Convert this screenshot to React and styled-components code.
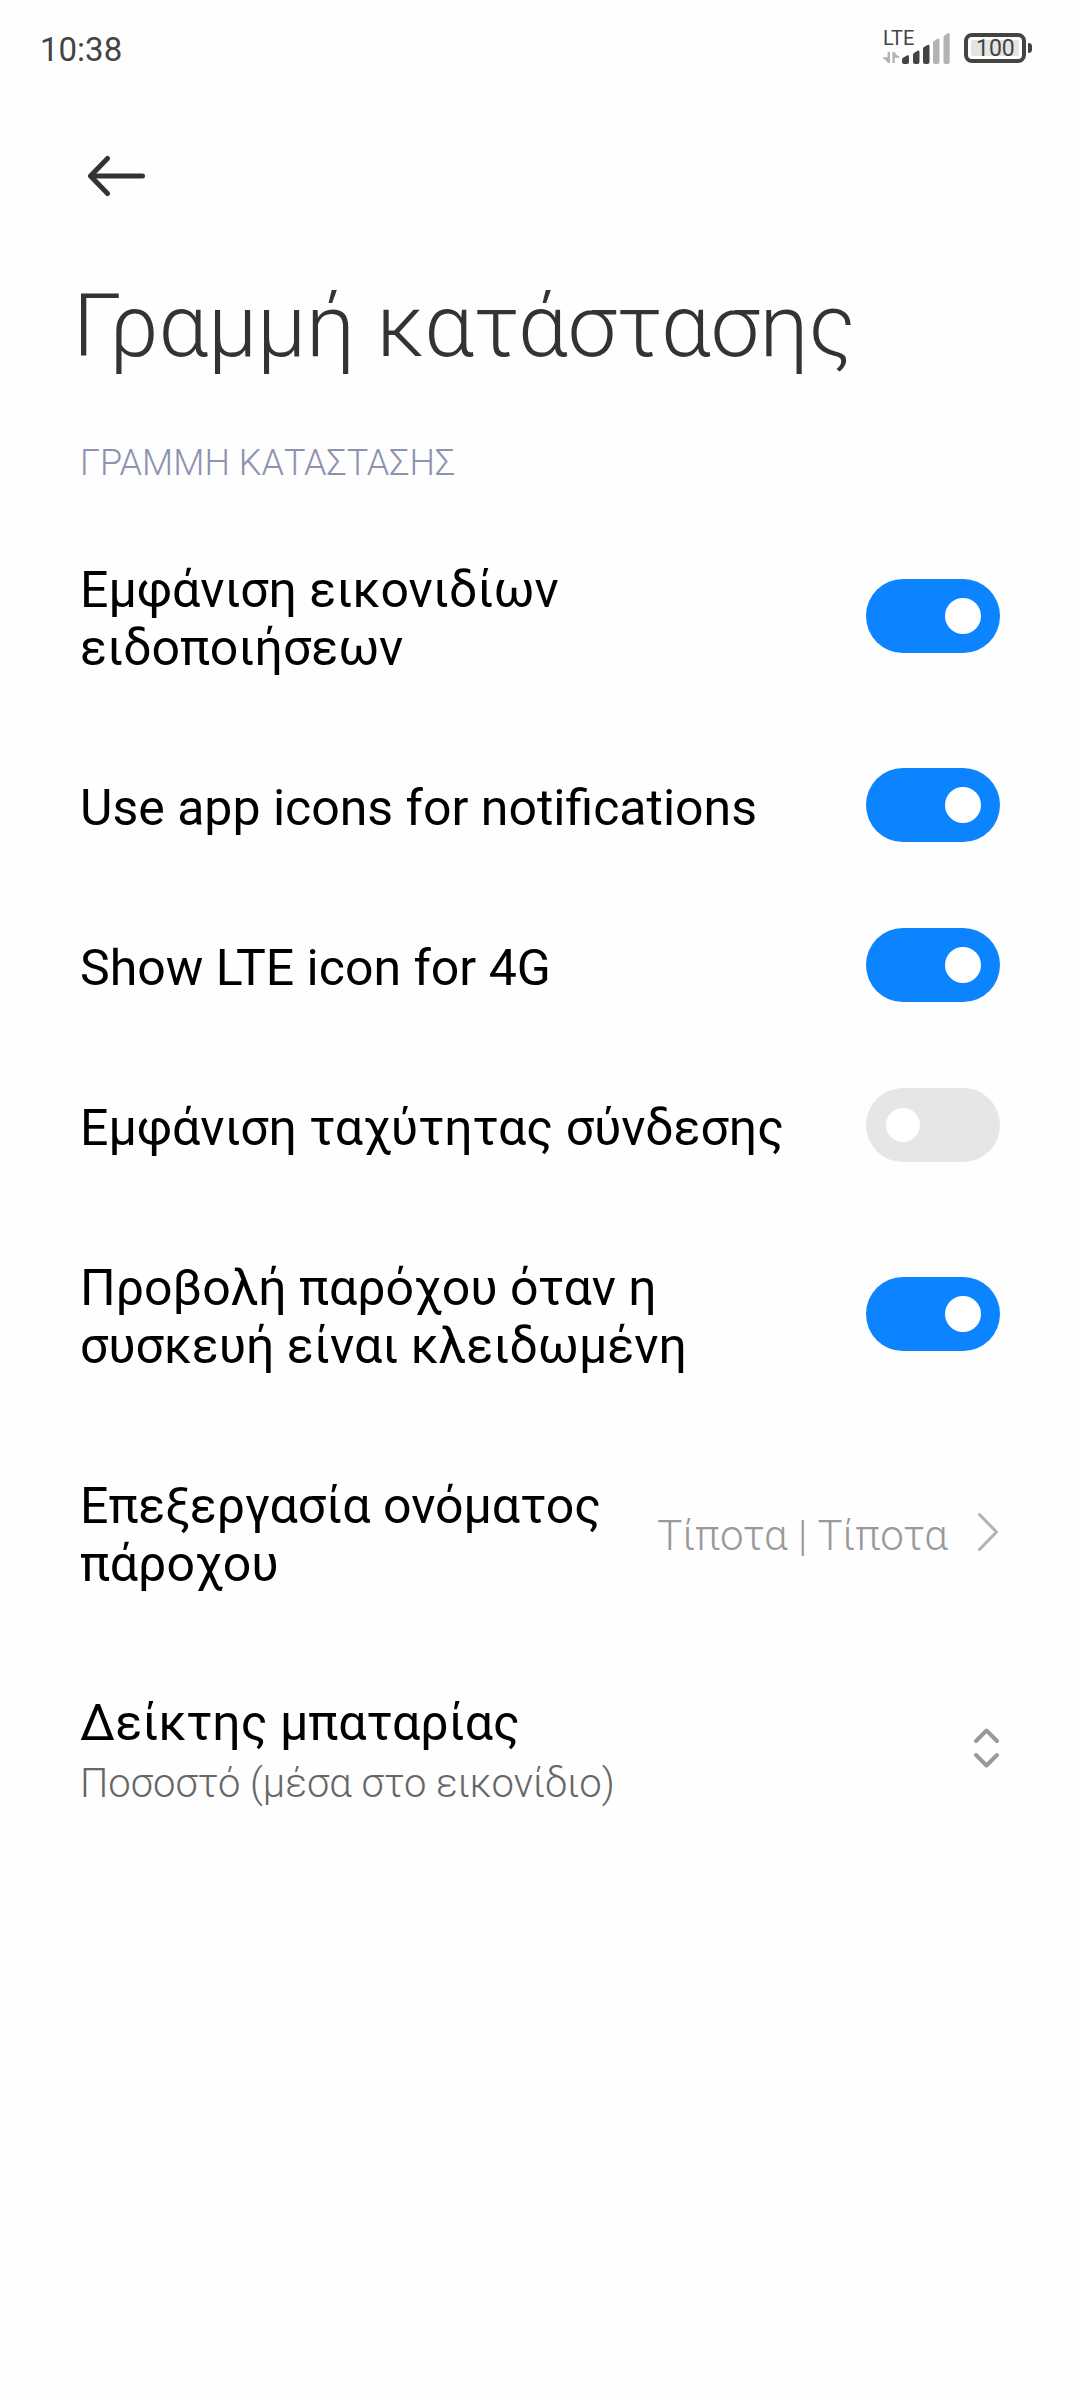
import React, { useState } from "react";
import styled, { createGlobalStyle } from "styled-components";

const switches = [
  { id: "notification-icons", label: "Εμφάνιση εικονιδίων ειδοποιήσεων", on: true },
  { id: "app-icons", label: "Use app icons for notifications", on: true },
  { id: "lte-icon", label: "Show LTE icon for 4G", on: true },
  { id: "connection-speed", label: "Εμφάνιση ταχύτητας σύνδεσης", on: false },
  { id: "carrier-locked", label: "Προβολή παρόχου όταν η συσκευή είναι κλειδωμένη", on: true },
];

export default function App() {
  const [values, setValues] = useState(
    Object.fromEntries(switches.map((item) => [item.id, item.on]))
  );

  const toggle = (id) => setValues((previous) => ({ ...previous, [id]: !previous[id] }));

  return (
    <>
      <GlobalStyle />
      <StatusBar>
        <Clock>10:38</Clock>
        <StatusIcons>
          <Network>
            <NetworkType>LTE</NetworkType>
            <SignalIcon />
          </Network>
          <Battery>
            <BatteryIcon />
            <BatteryLevel>100</BatteryLevel>
          </Battery>
        </StatusIcons>
      </StatusBar>

      <header>
        <NavBar>
          <BackButton type="button" aria-label="Πίσω">
            <BackIcon />
          </BackButton>
        </NavBar>
        <PageTitle>Γραμμή κατάστασης</PageTitle>
      </header>

      <Section>
        <SectionTitle>ΓΡΑΜΜΗ ΚΑΤΑΣΤΑΣΗΣ</SectionTitle>

        {switches.map((item) => (
          <Row key={item.id}>
            <RowLabel htmlFor={item.id}>{item.label}</RowLabel>
            <Switch
              id={item.id}
              type="checkbox"
              role="switch"
              checked={values[item.id]}
              onChange={() => toggle(item.id)}
            />
          </Row>
        ))}

        <RowButton type="button">
          <RowText>Επεξεργασία ονόματος πάροχου</RowText>
          <RowValue>Τίποτα | Τίποτα</RowValue>
          <RowIcon>
            <ChevronIcon />
          </RowIcon>
        </RowButton>

        <Row>
          <SelectGroup>
            <SelectLabel htmlFor="battery">Δείκτης μπαταρίας</SelectLabel>
            <Select id="battery" defaultValue="inside">
              <option value="inside">Ποσοστό (μέσα στο εικονίδιο)</option>
            </Select>
          </SelectGroup>
          <RowIcon>
            <UpDownIcon />
          </RowIcon>
        </Row>
      </Section>
    </>
  );
}

function SignalIcon() {
  return (
    <svg width="68" height="34" viewBox="883 32 68 34" aria-hidden="true">
      <g fill="#b3b3b3">
        <path d="M887.6 52h2.4v11h-2.2q-1-3-4.8-4.6v-1.2h4.6z" />
        <path d="M892.4 52h2.2q1 3 4.8 4.6v1.2h-4.6V63h-2.4z" />
        <path d="M933 42.5q0-1 1-1.500l3.500-2.300q2-.7 2 1.300V62q0 2-2 2H935q-2 0-2-2z" />
        <path d="M943.500 37q0-1 1-1.500l3.200-2.300q2-.7 2 1.300V62q0 2-2 2h-2.200q-2 0-2-2z" />
      </g>
      <g fill="#444">
        <path d="M902 60q0-1.500 1-2.200l4-2.300q2-.6 2 1.300V62q0 2-2 2h-3q-2 0-2-2z" />
        <path d="M913 55q0-1.500 1-2l3.500-2.200q2-.7 2 1.200V62q0 2-2 2H915q-2 0-2-2z" />
        <path d="M923 49q0-1.300 1-1.900l3.500-2.200q2-.7 2 1.200V62q0 2-2 2H925q-2 0-2-2z" />
      </g>
    </svg>
  );
}

function BatteryIcon() {
  return (
    <svg width="69" height="34" viewBox="964 32 69 34" aria-hidden="true">
      <rect x="966" y="35" width="58" height="26" rx="6" fill="none" stroke="#444" strokeWidth="4" />
      <rect x="971" y="40" width="48" height="16" rx="2" fill="#e4e4e4" />
      <path d="M1028 43q4 0 4 3v4q0 3-4 3z" fill="#444" />
    </svg>
  );
}

function BackIcon() {
  return (
    <svg width="60" height="42" viewBox="0 0 60 42" fill="none" stroke="#333" strokeWidth="5" aria-hidden="true">
      <path d="M5 21H56.500" strokeLinecap="round" />
      <path d="M21.500 3.500L4.500 21l17 17.500" strokeLinecap="round" strokeLinejoin="round" />
    </svg>
  );
}

function ChevronIcon() {
  return (
    <svg width="22" height="40" viewBox="0 0 22 40" fill="none" stroke="#b2b2b2" strokeWidth="3" aria-hidden="true">
      <path d="M1.500 2.500l17 17.500-17 17.500" strokeLinecap="round" strokeLinejoin="round" />
    </svg>
  );
}

function UpDownIcon() {
  return (
    <svg width="27" height="42" viewBox="0 0 27 42" fill="none" stroke="#999" strokeWidth="4" aria-hidden="true">
      <path d="M3 14L13.500 3.500 24 14M3 28l10.500 10.500L24 28" strokeLinecap="round" strokeLinejoin="round" />
    </svg>
  );
}

const GlobalStyle = createGlobalStyle`
  * {
    box-sizing: border-box;
  }
  body {
    margin: 0;
    background-color: #fefefe;
    color: #000;
    font-family: Roboto, "Noto Sans", sans-serif;
  }
  svg {
    display: block;
  }
`

const StatusBar = styled.div`
  display: flex;
  align-items: center;
  justify-content: space-between;
  height: 98px;
  padding: 0 47px 0 40px;
  color: #444;
`

const Clock = styled.time`
  font-size: 33px;
`

const StatusIcons = styled.div`
  display: flex;
  align-items: center;
  gap: 13px;
`

const Network = styled.div`
  position: relative;
`

const NetworkType = styled.span`
  position: absolute;
  top: -5px;
  left: 0;
  font-size: 20px;
  line-height: 22px;
`

const Battery = styled.div`
  position: relative;
`

const BatteryLevel = styled.span`
  position: absolute;
  top: 4px;
  left: 12px;
  font-size: 23px;
  line-height: 26px;
`

const NavBar = styled.nav`
  display: flex;
  align-items: center;
  height: 156px;
  padding: 0 86px;
`

const BackButton = styled.button`
  padding: 0;
  border: none;
  background: none;
  cursor: pointer;
`

const PageTitle = styled.h1`
  margin: 0;
  padding: 20px 73px 0;
  color: #333;
  font-size: 88px;
  font-weight: 300;
  line-height: 104px;
`

const Section = styled.section`
  padding: 64px 80px;
`

const SectionTitle = styled.h2`
  margin: 0 0 26px;
  color: #8c93b0;
  font-size: 36px;
  font-weight: 300;
  line-height: 42px;
`

const Row = styled.div`
  display: flex;
  align-items: center;
`

const RowButton = styled(Row).attrs({ as: "button" })`
  width: 100%;
  padding: 0;
  border: none;
  background: none;
  color: inherit;
  font-family: inherit;
  text-align: left;
  cursor: pointer;
`

const RowText = styled.span`
  flex: 1;
  padding: 51px 0;
  font-size: 50px;
  line-height: 58px;
`

const RowLabel = styled(RowText).attrs({ as: "label" })``

const RowValue = styled.span`
  margin-right: 30px;
  color: #999;
  font-size: 42px;
  font-weight: 300;
  white-space: nowrap;
`

const RowIcon = styled.span`
  flex: none;
  margin-bottom: 6px;
`

const Switch = styled.input`
  appearance: none;
  display: flex;
  flex: none;
  align-items: center;
  justify-content: flex-start;
  width: 134px;
  height: 74px;
  margin: 0 0 6px 32px;
  padding: 0 20px;
  border-radius: 37px;
  background-color: #e6e6e6;
  cursor: pointer;

  &::before {
    content: "";
    width: 34px;
    height: 34px;
    border-radius: 50%;
    background-color: #fff;
  }

  &:checked {
    justify-content: flex-end;
    padding: 0 19px;
    background-color: #0d84ff;
  }

  &:checked::before {
    width: 36px;
    height: 36px;
  }
`

const SelectGroup = styled.div`
  display: flex;
  flex: 1;
  flex-direction: column;
  gap: 8px;
  padding: 50px 0;
`

const SelectLabel = styled.label`
  font-size: 50px;
  line-height: 58px;
`

const Select = styled.select`
  appearance: none;
  height: 47px;
  padding: 0;
  border: none;
  background: none;
  color: #666;
  font-family: inherit;
  font-size: 40px;
  font-weight: 300;
  cursor: pointer;
`
